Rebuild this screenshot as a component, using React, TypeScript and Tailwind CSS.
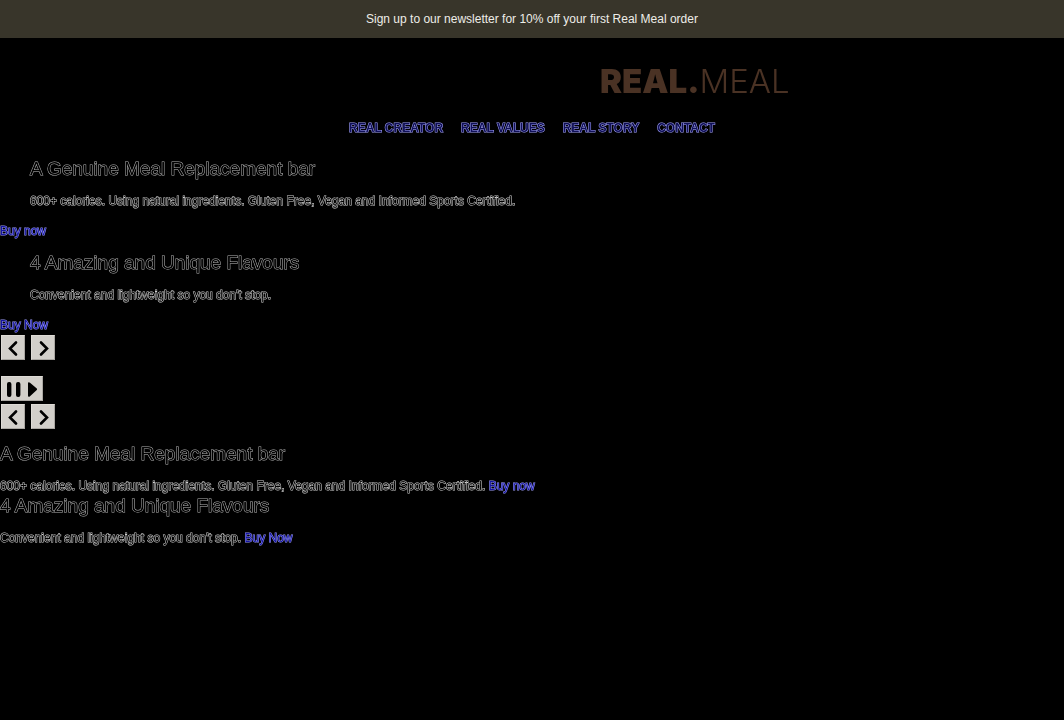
import type { ReactNode } from "react";

const NAV_LINKS = ["Real Creator", "Real Values", "Real Story", "Contact"];

const SLIDES = [
  {
    title: "A Genuine Meal Replacement bar",
    text: "600+ calories. Using natural ingredients. Gluten Free, Vegan and Informed Sports Certified.",
    cta: "Buy now",
  },
  {
    title: "4 Amazing and Unique Flavours",
    text: "Convenient and lightweight so you don't stop.",
    cta: "Buy Now",
  },
];

// Black lettering that only shows by its thin outline
function Title({ children }: { children: ReactNode }) {
  return (
    <h2 className="text-[19px] leading-[23px] text-black [-webkit-text-stroke:1px_#b4b4b4] [paint-order:stroke_fill]">
      {children}
    </h2>
  );
}

function BuyLink({ children }: { children: ReactNode }) {
  return (
    <a
      href="#buy"
      className="text-[#1414a0] [-webkit-text-stroke:1px_#9a9af4] [paint-order:stroke_fill]"
    >
      {children}
    </a>
  );
}

function IconButton({ label, children }: { label: string; children: ReactNode }) {
  return (
    <button
      type="button"
      aria-label={label}
      className="flex h-[25px] items-center justify-center border border-[#dedbd6] border-r-[#aaa7a2] border-b-[#aaa7a2] bg-[#d2cfca] px-[2px] text-black"
    >
      {children}
    </button>
  );
}

function Arrows() {
  return (
    <div className="flex gap-1.5 pl-px">
      <IconButton label="Previous slide">
        <svg width="18" height="18" viewBox="0 0 18 18" fill="none" stroke="currentColor" strokeWidth="2.6" strokeLinecap="round">
          <path d="M12 3.5 6 9.5l6 6" />
        </svg>
      </IconButton>
      <IconButton label="Next slide">
        <svg width="18" height="18" viewBox="0 0 18 18" fill="none" stroke="currentColor" strokeWidth="2.6" strokeLinecap="round">
          <path d="m7 3.5 6 6-6 6" />
        </svg>
      </IconButton>
    </div>
  );
}

export default function App() {
  return (
    <div className="min-h-screen bg-black font-['Liberation_Sans',Arial,sans-serif] text-xs leading-4">
      <div className="bg-[#38352a] py-[11px] text-center text-[#eeede8]">
        Sign up to our newsletter for 10% off your first Real Meal order
      </div>

      <header className="will-change-[opacity]">
        <a
          href="#home"
          aria-label="Real Meal"
          className="mt-[25px] ml-[600px] block w-fit font-[Inter,sans-serif] text-[33px] leading-9 text-[#4a3224]"
        >
          <span className="font-black">REAL.</span>
          <span className="font-light">MEAL</span>
        </a>
        <nav className="mt-[21px] flex justify-center gap-[18px] font-bold uppercase">
          {NAV_LINKS.map((name) => (
            <a
              key={name}
              href="#nav"
              className="text-[#101058] [-webkit-text-stroke:1px_#a4a4f8] [paint-order:stroke_fill]"
            >
              {name}
            </a>
          ))}
        </nav>
      </header>

      <main className="mt-[21px] will-change-[opacity]">
        {/* Slider */}
        <section className="flex flex-col gap-3">
          {SLIDES.map((slide) => (
            <div key={slide.title}>
              <div className="px-[30px]">
                <Title>{slide.title}</Title>
                <p className="mt-[13px] text-black [-webkit-text-stroke:1px_#d4d4d4] [paint-order:stroke_fill]">
                  {slide.text}
                </p>
              </div>
              <div className="mt-[14px]">
                <BuyLink>{slide.cta}</BuyLink>
              </div>
            </div>
          ))}
        </section>

        <div className="mt-0.5">
          <Arrows />
        </div>
        <div className="mt-4 flex pl-px">
          <IconButton label="Pause or play slides">
            <svg width="36" height="18" viewBox="0 0 36 18" fill="currentColor">
              <rect x="3" y="2" width="4.4" height="15" rx="2" />
              <rect x="12" y="2" width="4.4" height="15" rx="2" />
              <path d="M24 3.5c0-1.4 1-1.8 2-.8l6.5 5.5c.8.7.8 1.4 0 2.1L26 16.2c-1 1-2 .6-2-.8z" />
            </svg>
          </IconButton>
        </div>
        <div className="mt-[3px]">
          <Arrows />
        </div>

        {/* Plain copy of the slides */}
        <section className="mt-[13px]">
          {SLIDES.map((slide) => (
            <div key={slide.title}>
              <Title>{slide.title}</Title>
              <p className="mt-[13px] text-black [-webkit-text-stroke:1px_#d4d4d4] [paint-order:stroke_fill]">
                {slide.text} <BuyLink>{slide.cta}</BuyLink>
              </p>
            </div>
          ))}
        </section>
      </main>
    </div>
  );
}
